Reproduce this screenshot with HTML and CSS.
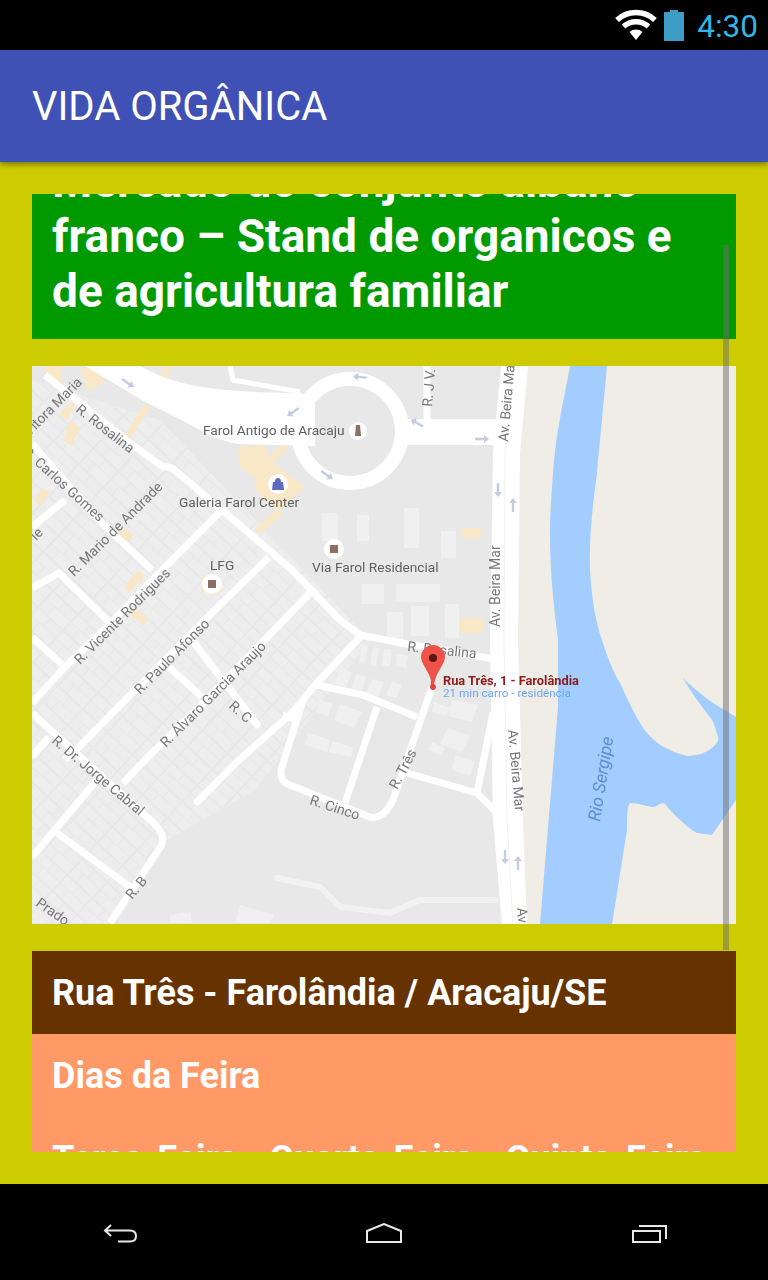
FILE: index.html
```html
<!DOCTYPE html>
<html lang="pt">
<head>
  <meta charset="UTF-8" />
  <title>Vida Orgânica</title>
  <link rel="stylesheet" href="styles.css">
</head>
<body>
  <div class="phone">
    <div class="status-bar">
      <svg class="wifi" width="44" height="32" viewBox="0 0 44 32">
        <path d="M3 11 A27.500 27.500 0 0 1 41 11" class="wifi-arc" />
        <path d="M9.500 17.500 A18.500 18.500 0 0 1 34.500 17.500" class="wifi-arc" />
        <path d="M15.500 23 L22 31 L28.500 23 A10 10 0 0 0 15.500 23 Z" fill="#fff" />
      </svg>
      <svg class="battery" width="20" height="31" viewBox="0 0 20 31">
        <path d="M6 0 H14 V2 H20 V31 H0 V2 H6 Z" fill="#3d9dc4" />
      </svg>
      <span class="clock">4:30</span>
    </div>

    <header class="app-bar">VIDA ORGÂNICA</header>

    <main class="content">
      <div class="scroller">
        <div class="scroll-inner">
          <h2 class="block block-title">Mercado do conjunto albano franco – Stand de organicos e de agricultura familiar</h2>

          <!-- mapa -->
          <svg class="map" width="704" height="558" viewBox="32 366 704 558">
            <defs>
              <pattern id="lots" width="34" height="22" patternUnits="userSpaceOnUse" patternTransform="rotate(43)">
                <rect width="34" height="22" fill="#e8e8e8" />
                <rect x="1" y="1" width="15" height="9" fill="#eeeeee" />
                <rect x="17" y="1" width="16" height="9" fill="#ededed" />
                <rect x="1" y="11" width="10" height="10" fill="#ededed" />
                <rect x="12" y="11" width="21" height="10" fill="#eeeeee" />
              </pattern>
              <path id="arrow" d="M0 -7 L4 -2 H1.200 V7 H-1.200 V-2 H-4 Z" fill="#c5cbe3" />
            </defs>

            <rect x="32" y="366" width="704" height="558" fill="#e8e8e8" />
            <rect x="515" y="366" width="221" height="558" fill="#efede5" />

            <!-- quadras -->
            <path d="M32 380 L160 420 L370 640 L255 790 L150 850 L120 923 L32 923 Z" fill="url(#lots)" />
            <g fill="#f0f0f0">
              <rect x="322" y="513" width="16" height="28" />
              <rect x="357" y="515" width="12" height="26" />
              <rect x="404" y="508" width="15" height="40" />
              <rect x="441" y="531" width="15" height="27" />
              <rect x="362" y="584" width="22" height="20" />
              <rect x="396" y="584" width="44" height="18" />
              <rect x="411" y="606" width="18" height="30" />
              <rect x="445" y="604" width="14" height="34" />
              <rect x="387" y="612" width="16" height="28" />
              <path d="M362 645 L368 646 L365 664 L359 663 Z" />
              <path d="M373 647 L379 648 L376 666 L370 665 Z" />
              <path d="M384 649 L392 650 L390 666 L382 665 Z" />
              <path d="M397 654 L408 656 L406 668 L396 666 Z" />
              <path d="M340 668 L352 672 L346 688 L335 684 Z" />
              <path d="M356 674 L366 677 L362 690 L352 688 Z" />
              <path d="M372 679 L384 682 L378 698 L366 694 Z" />
              <path d="M392 682 L402 685 L396 698 L386 695 Z" />
              <path d="M320 700 L333 704 L328 716 L316 712 Z" />
              <path d="M340 704 L362 712 L354 728 L334 720 Z" />
              <path d="M308 733 L330 740 L327 752 L305 745 Z" />
              <path d="M332 741 L354 748 L351 757 L329 752 Z" />
              <path d="M434 702 L450 708 L446 716 L432 712 Z" />
              <path d="M448 728 L470 736 L462 752 L440 744 Z" />
              <path d="M432 742 L445 748 L442 756 L428 750 Z" />
              <path d="M456 755 L475 762 L470 776 L452 770 Z" />
              <path d="M452 700 L478 705 L472 722 L448 716 Z" />
              <path d="M240 905 L275 915 L270 923 L236 923 Z" />
              <path d="M170 915 L190 912 L192 923 L170 923 Z" />
            </g>

            <!-- comercio -->
            <g fill="#f8e8c8">
              <path d="M238 447 L264 445 L270 457 L283 443 L289 448 L273 463 L305 487 L278 512 L253 487 L257 480 L240 467 Z" />
              <path d="M276 510 L283 514 L260 534 L254 530 Z" />
              <path d="M145 403 L150 407 L128 442 L122 438 Z" />
              <path d="M80 368 L100 368 L104 382 L88 392 Z" />
              <path d="M45 366 L62 366 L62 384 L48 384 Z" />
              <path d="M165 366 L173 366 L165 381 L159 378 Z" />
              <path d="M65 408 L78 396 L68 420 L58 415 Z" />
              <path d="M70 420 L80 428 L72 446 L63 440 Z" />
              <path d="M42 488 L50 492 L40 506 L34 500 Z" />
              <path d="M122 528 L134 534 L127 546 L117 541 Z" />
              <path d="M138 570 L146 576 L128 593 L124 587 Z" />
              <path d="M135 608 L148 620 L143 626 L130 614 Z" />
              <path d="M203 575 L225 590 L212 596 L200 590 Z" />
              <rect x="461" y="528" width="20" height="10" />
              <rect x="459" y="618" width="25" height="15" />
            </g>

            <!-- ruas -->
            <g fill="none" stroke="#fff" stroke-width="7" stroke-linejoin="round">
              <path d="M45 375 L130 443 L163 467 Q170 466 177 472 L222 510 L292 570 L340 620 L360 635 L407 644 L500 660" />
              <path d="M32 444 L102 523 L152 570" />
              <path d="M192 640 L259 727" />
              <path d="M222 510 L169 563 L112 622 L65 667 L32 703" />
              <path d="M269 557 L212 613 L135 690 L79 747 L65 760" />
              <path d="M49 737 L32 757" />
              <path d="M310 593 L219 687 L145 760 L123 783" />
              <path d="M97 780 L32 857" />
              <path d="M197 802 L239 760 L292 713 L317 683 L360 637" stroke-linecap="round" />
              <path d="M32 713 L147 817 Q168 834 161 846 L110 923" />
              <path d="M57 833 L130 887" />
              <path d="M32 637 L65 667" />
              <path d="M169 667 L202 697" />
              <path d="M32 588 L59 573 L109 622" />
              <path d="M32 527 L65 500" />
              <path d="M317 685 L363 695 L417 717" />
              <path d="M303 700 L281 770 Q280 782 290 785 L370 817 Q383 820 393 800 L432 687" />
              <path d="M283 715 L297 720" />
              <path d="M377 707 L345 803" />
              <path d="M407 773 L477 793 L497 813" />
              <path d="M477 793 L493 713" />
              <path d="M427 366 L427 420" />
              <path d="M230 366 L233 380 L300 392" stroke-width="5" />
              <circle cx="350" cy="431" r="52" stroke-width="14" />
            </g>
            <path d="M85 366 H140 C175 385 205 392 300 393 L315 398 V446 L240 444 C215 442 195 425 145 402 Z" fill="#fff" />
            <rect x="395" y="419" width="103" height="26" fill="#fff" />
            <path d="M501 366 H528 L520 453 L518 640 L523 820 L527 924 H502 L493 820 L490 640 L493 453 Z" fill="#fff" />
            <path d="M513 366 L505 453 L504 640 L507 820 L513 924" fill="none" stroke="#f2f2f2" stroke-width="1" />
            <path d="M277 878 L320 887 L340 907 L390 913 L420 900 L495 900" fill="none" stroke="#f2f2f2" stroke-width="6" stroke-linecap="round" />

            <!-- rio -->
            <path d="M570 366 H607 C603 410 600 440 597 473 C592 510 589 540 590 570 C592 600 595 620 602 640 C608 660 615 675 620 683 C630 705 640 725 647 733 C655 742 665 750 687 756 C698 756 708 752 713 747 C718 742 719 740 718 737 C716 730 714 722 710 717 C700 705 690 690 683 678 C690 685 705 698 713 703 L736 717 V800 L712 835 L697 833 C688 828 680 820 673 813 C668 808 666 804 663 803 C658 804 656 807 653 807 C645 806 638 803 630 803 C627 806 627 815 627 830 L612 924 H540 L558 707 L558 640 C553 600 550 570 550 533 C550 510 552 490 553 473 C556 430 565 395 570 366 Z" fill="#a3ccff" />

            <!-- setas -->
            <use href="#arrow" transform="translate(128 383) rotate(125)" />
            <use href="#arrow" transform="translate(293 412) rotate(235)" />
            <use href="#arrow" transform="translate(327 475) rotate(125)" />
            <use href="#arrow" transform="translate(360 377) rotate(275)" />
            <use href="#arrow" transform="translate(417 423) rotate(300)" />
            <use href="#arrow" transform="translate(482 439) rotate(90)" />
            <use href="#arrow" transform="translate(498 490) rotate(180)" />
            <use href="#arrow" transform="translate(513 505)" />
            <use href="#arrow" transform="translate(505 857) rotate(180)" />
            <use href="#arrow" transform="translate(518 863)" />

            <!-- nomes -->
            <g class="street">
              <text x="203" y="435" class="poi">Farol Antigo de Aracaju</text>
              <text x="179" y="507" class="poi">Galeria Farol Center</text>
              <text x="312" y="572" class="poi">Via Farol Residencial</text>
              <text x="210" y="570" class="poi">LFG</text>
              <text transform="translate(75 411) rotate(38)">R. Rosalina</text>
              <text transform="translate(22 453) rotate(42)">R. Carlos Gomes</text>
              <text transform="translate(74 577) rotate(-45)">R. Mario de Andrade</text>
              <text transform="translate(80 665) rotate(-45)">R. Vicente Rodrigues</text>
              <text transform="translate(140 695) rotate(-45)">R. Paulo Afonso</text>
              <text transform="translate(166 748) rotate(-45)">R. Álvaro Garcia Araujo</text>
              <text transform="translate(228 707) rotate(42)">R. C</text>
              <text transform="translate(51 742) rotate(40)">R. Dr. Jorge Cabral</text>
              <text transform="translate(132 900) rotate(-50)">R. B</text>
              <text transform="translate(35 905) rotate(35)">Prado</text>
              <text transform="translate(309 804) rotate(18)">R. Cinco</text>
              <text transform="translate(397 790) rotate(-62)">R. Três</text>
              <text transform="translate(508 442) rotate(-85)">Av. Beira Mar</text>
              <text transform="translate(500 627) rotate(-90)">Av. Beira Mar</text>
              <text transform="translate(508 730) rotate(85)">Av. Beira Mar</text>
              <text transform="translate(517 908) rotate(85)">Av. Beira Mar</text>
              <text transform="translate(432 407) rotate(-85)">R. J V.</text>
              <text transform="translate(407 651) rotate(6)">R. Rosalina</text>
              <text transform="translate(83 383) rotate(-45)" text-anchor="end">R. Vitora Maria</text>
              <text transform="translate(36 541) rotate(-45)">ie</text>
              <text transform="translate(600 822) rotate(-81)" class="river">Rio Sergipe</text>
            </g>

            <!-- icones -->
            <circle cx="358" cy="431" r="9" fill="#fff" />
            <path d="M356 425 H360 L361 436 H355 Z" fill="#8d6e63" />
            <circle cx="278" cy="484" r="10" fill="#fff" />
            <path d="M273 482 H283 L284 490 H272 Z M275 482 A3 4 0 0 1 281 482 Z" fill="#5c6bc0" />
            <circle cx="334" cy="549" r="10" fill="#fff" />
            <rect x="330" y="545" width="8" height="8" fill="#8d6e63" />
            <circle cx="212" cy="584" r="10" fill="#fff" />
            <rect x="208" y="580" width="8" height="8" fill="#8d6e63" />

            <!-- marcador -->
            <rect x="431" y="670" width="3" height="16" fill="#d93a32" />
            <path d="M433 645 C440 645 445 651 445 657 C445 664 437 670 434 684 H432 C429 670 421 664 421 657 C421 651 426 645 433 645 Z" fill="#ee5249" />
            <circle cx="433" cy="658" r="4" fill="#5c1510" />
            <circle cx="433" cy="687" r="3" fill="#e5433a" />
            <text x="443" y="685" class="pin-title">Rua Três, 1 - Farolândia</text>
            <text x="443" y="697" class="pin-sub">21 min carro - residência</text>
          </svg>

          <div class="block block-address">Rua Três - Farolândia / Aracaju/SE</div>
          <div class="block block-days">Dias da Feira</div>
          <div class="block block-days">Terça-Feira - Quarta-Feira - Quinta-Feira</div>
        </div>
        <div class="scrollbar"></div>
      </div>
    </main>

    <nav class="nav-bar">
      <svg width="35" height="19" viewBox="0 0 35 19" class="nav-icon">
        <path d="M8 1 L2 6.500 L8 12 M2 6.500 H27 Q33 6.500 33 12 Q33 17.500 27 17.500 H15" />
      </svg>
      <svg width="36" height="20" viewBox="0 0 36 20" class="nav-icon">
        <path d="M1 19 V8 L18 1 L35 8 V19 Z" />
      </svg>
      <svg width="35" height="18" viewBox="0 0 35 18" class="nav-icon">
        <path d="M1 6 H28 V17 H1 Z M7 1 H34 V14" />
      </svg>
    </nav>
  </div>
</body>
</html>
```

FILE: styles.css
```css
* {
  box-sizing: border-box;
}
body {
  margin: 0;
  font-family: Roboto, sans-serif;
  background: #000;
}
.phone {
  width: 768px;
  height: 1280px;
  display: flex;
  flex-direction: column;
  overflow: hidden;
}

/* barra de status */
.status-bar {
  height: 50px;
  flex: none;
  background: #000;
  display: flex;
  align-items: center;
  justify-content: flex-end;
  padding-right: 10px;
}
.wifi {
  margin-right: 6px;
}
.wifi-arc {
  fill: none;
  stroke: #fff;
  stroke-width: 5.5;
}
.battery {
  margin-right: 13px;
  margin-top: 1px;
}
.clock {
  color: #33b5e5;
  font-size: 31.5px;
  line-height: 50px;
  margin-top: 4px;
}

/* barra do app */
.app-bar {
  height: 112px;
  flex: none;
  background: #3f51b5;
  color: #fff;
  font-size: 40px;
  line-height: 110px;
  padding: 2px 0 0 32px;
  box-shadow: 0 2px 6px rgba(0,0,0,0.45);
  position: relative;
  z-index: 1;
}

.content {
  flex: 1;
  background: #cccc00;
  padding: 32px;
  min-height: 0;
}
.scroller {
  height: 100%;
  overflow: hidden;
  position: relative;
}
.scroll-inner {
  margin-top: -60px;
}
.scrollbar {
  position: absolute;
  top: 51px;
  right: 7px;
  width: 6px;
  height: 705px;
  background: rgba(110,110,110,0.5);
}

.block {
  color: #fff;
  font-weight: 700;
  font-size: 36px;
  line-height: 43px;
  padding: 21px 20px 19px;
  margin: 0;
}
.block-title {
  background: #009900;
  font-size: 46px;
  line-height: 55px;
  padding: 20px;
}
.block-address {
  background: #663300;
}
.block-days {
  background: #ff9966;
}

/* mapa */
.map {
  display: block;
  margin: 27px 0;
  filter: blur(0.7px);
}
.street text {
  font-family: Roboto, sans-serif;
  font-size: 14px;
  fill: #777;
}
.street .poi {
  font-size: 13.7px;
  fill: #5f5f5f;
}
.street .river {
  font-style: italic;
  font-size: 17.5px;
  fill: #5b8fd0;
}
.pin-title {
  font-family: Roboto, sans-serif;
  font-size: 12.8px;
  font-weight: 700;
  fill: #8e1c1c;
}
.pin-sub {
  font-family: Roboto, sans-serif;
  font-size: 11.7px;
  fill: #6ea8f0;
}

/* navegacao */
.nav-bar {
  height: 96px;
  flex: none;
  background: #000;
  display: grid;
  grid-template-columns: 103px 35px 228px 36px 230px 35px;
  align-items: start;
  padding-top: 39px;
}
.nav-icon {
  fill: none;
  stroke: #e8e8e8;
  stroke-width: 2;
}
.nav-icon:nth-child(1) {
  grid-column: 2;
  margin-top: 1px;
}
.nav-icon:nth-child(2) {
  grid-column: 4;
}
.nav-icon:nth-child(3) {
  grid-column: 6;
  margin-top: 2px;
}
```
